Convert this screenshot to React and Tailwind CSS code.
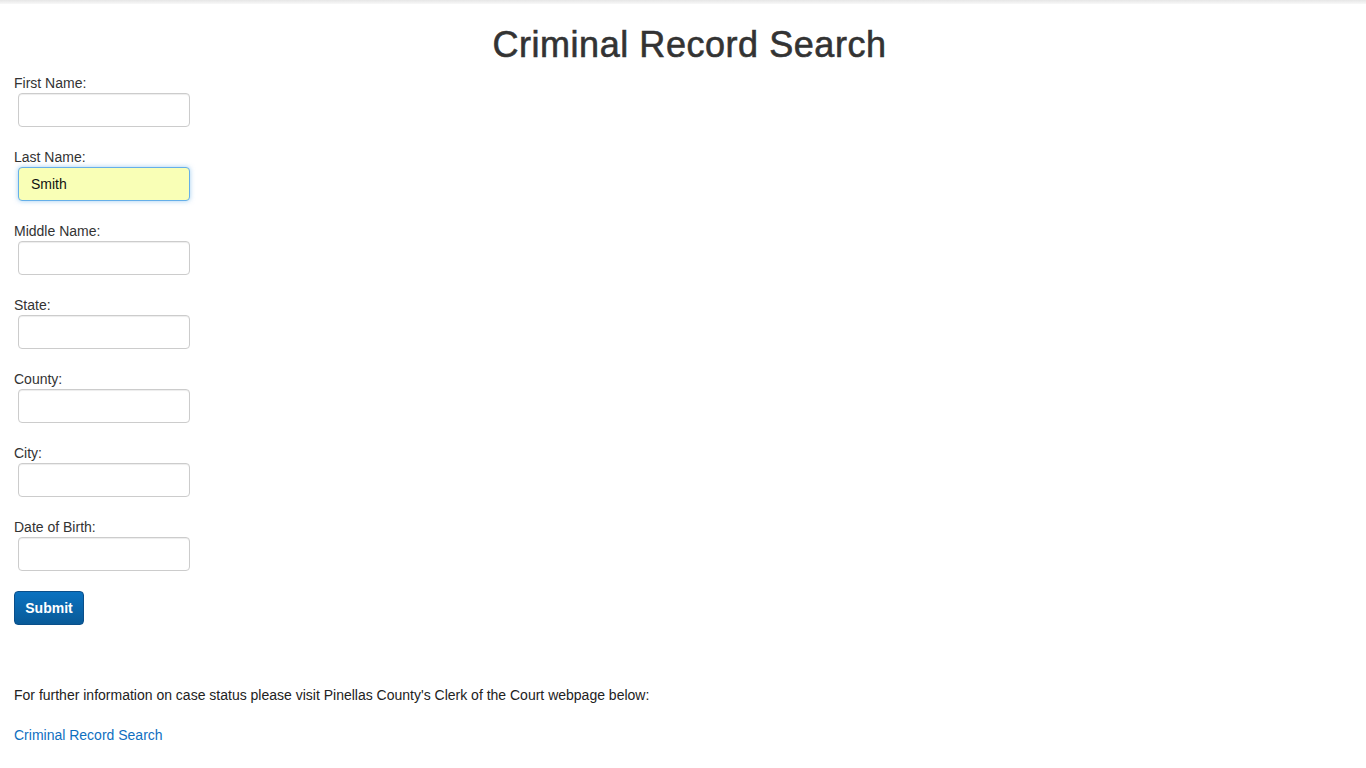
import React, { useState } from "react";

const fields = [
  { id: "first", label: "First Name:" },
  { id: "last", label: "Last Name:", value: "Smith", focused: true },
  { id: "middle", label: "Middle Name:" },
  { id: "state", label: "State:" },
  { id: "county", label: "County:" },
  { id: "city", label: "City:" },
  { id: "dob", label: "Date of Birth:" },
];

const App = () => {
  const [values, setValues] = useState(
    Object.fromEntries(fields.map((f) => [f.id, f.value || ""]))
  );

  return (
    <div
      className="min-h-screen bg-white text-[#333] text-[14px]"
      style={{ fontFamily: '"Liberation Sans", Arial, sans-serif' }}
    >
      <div className="h-[4px] bg-gradient-to-b from-[#e6e6e6] to-[#f8f8f8]" />
      {/* heading is Helvetica medium in the original, fake it with a thin stroke */}
      <h1 className="text-center text-[36px] leading-[40px] font-normal tracking-[0.55px] [-webkit-text-stroke:0.6px_#333] pt-[21px] pl-[13px] text-[#333]">
        Criminal Record Search
      </h1>
      <form
        onSubmit={(e) => e.preventDefault()}
        className="px-[14px] pt-[8px] flex flex-col"
      >
        {fields.map((f) => (
          <div key={f.id} className="flex flex-col mb-[20px]">
            <label htmlFor={f.id} className="leading-[20px]">
              {f.label}
            </label>
            <input
              id={f.id}
              type="text"
              value={values[f.id]}
              onChange={(e) => setValues({ ...values, [f.id]: e.target.value })}
              className={
                f.focused
                  ? "ml-[4px] w-[172px] h-[34px] px-[12px] rounded-[4px] border border-[#66afe9] bg-[#f9ffb6] text-[#111] shadow-[0_0_5px_rgba(102,175,233,0.6)] outline-none"
                  : "ml-[4px] w-[172px] h-[34px] px-[12px] rounded-[4px] border border-[#cccccc] bg-white shadow-[inset_0_1px_1px_rgba(0,0,0,0.075)] outline-none"
              }
            />
          </div>
        ))}
        <div>
          <button
            type="submit"
            className="w-[70px] h-[34px] rounded-[4px] border border-[#0a4f8a] bg-gradient-to-b from-[#0b72c0] to-[#095a98] text-white font-bold text-[14px]"
          >
            Submit
          </button>
        </div>
      </form>
      <p className="px-[14px] mt-[60px] leading-[20px] text-[14px] text-[#222]">
        For further information on case status please visit Pinellas County's
        Clerk of the Court webpage below:
      </p>
      <p className="px-[14px] mt-[20px] leading-[20px] text-[14px]">
        <a href="#" className="text-[#0f6fbf]">
          Criminal Record Search
        </a>
      </p>
    </div>
  );
};

export default App;
